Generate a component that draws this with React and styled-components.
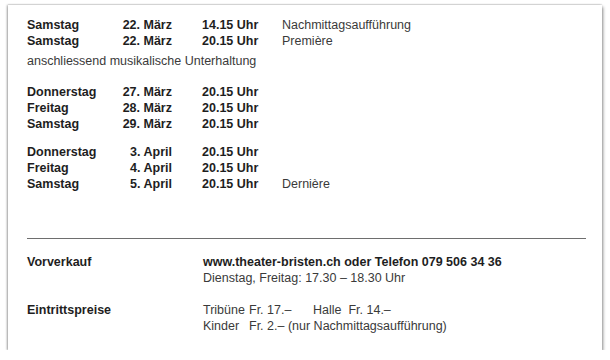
import React from "react";
import styled, { createGlobalStyle } from "styled-components";

const GlobalStyle = createGlobalStyle`
  body {
    margin: 0;
    background: #ffffff;
    font-family: "Liberation Sans", Arial, sans-serif;
  }
`;

const Card = styled.div`
  box-sizing: border-box;
  width: 594px;
  height: 345px;
  margin: 5px 0 0 8px;
  padding: 12px 16px 0 19px;
  background: #fff;
  box-shadow: 1px 2px 3px rgba(0, 0, 0, 0.45), -1px 0 2px rgba(0, 0, 0, 0.3),
    0 -1px 1px rgba(0, 0, 0, 0.06);
  font-size: 12.5px;
  line-height: 16px;
  color: #3a3a3a;
`;

const Group = styled.div`
  margin-top: ${(p) => p.$gap || 0}px;
`;

const Row = styled.div`
  display: grid;
  grid-template-columns: 95px 50px 110px 1fr;
  white-space: nowrap;
`;

const Day = styled.span`
  font-weight: bold;
  color: #1e1e1e;
`;

const DateCell = styled.span`
  font-weight: bold;
  color: #1e1e1e;
  text-align: right;
`;

const Time = styled.span`
  font-weight: bold;
  color: #1e1e1e;
  padding-left: 30px;
`;

const Note = styled.span``;

const Remark = styled.div`
  margin-top: 4px;
`;

const Rule = styled.hr`
  margin: 46px 0 0;
  border: none;
  border-top: 1px solid #6e6e6e;
`;

const InfoRow = styled.div`
  display: grid;
  grid-template-columns: 176px 1fr;
  margin-top: ${(p) => p.$gap}px;
`;

const Label = styled.div`
  font-weight: bold;
  color: #1e1e1e;
`;

const Strong = styled.div`
  font-weight: bold;
  color: #1e1e1e;
`;

const PriceRow = styled.div`
  display: flex;
  white-space: nowrap;
`;

const PriceLabel = styled.span`
  width: 46px;
`;

const Amount = styled.span`
  width: ${(p) => p.$w || "auto"};
`;

const shows = [
  [
    ["Samstag", "22. März", "14.15 Uhr", "Nachmittagsaufführung"],
    ["Samstag", "22. März", "20.15 Uhr", "Première"],
  ],
  [
    ["Donnerstag", "27. März", "20.15 Uhr", ""],
    ["Freitag", "28. März", "20.15 Uhr", ""],
    ["Samstag", "29. März", "20.15 Uhr", ""],
  ],
  [
    ["Donnerstag", "3. April", "20.15 Uhr", ""],
    ["Freitag", "4. April", "20.15 Uhr", ""],
    ["Samstag", "5. April", "20.15 Uhr", "Dernière"],
  ],
];

const gaps = [0, 15, 12];

function ShowRow({ show }) {
  const [day, date, time, note] = show;
  return (
    <Row>
      <Day>{day}</Day>
      <DateCell>{date}</DateCell>
      <Time>{time}</Time>
      <Note>{note}</Note>
    </Row>
  );
}

export default function App() {
  return (
    <>
      <GlobalStyle />
      <Card>
        {shows.map((group, i) => (
          <React.Fragment key={i}>
            <Group $gap={gaps[i]}>
              {group.map((s, j) => (
                <ShowRow key={j} show={s} />
              ))}
            </Group>
            {i === 0 && (
              <Remark>anschliessend musikalische Unterhaltung</Remark>
            )}
          </React.Fragment>
        ))}
        <Rule />
        <InfoRow $gap={15}>
          <Label>Vorverkauf</Label>
          <div>
            <Strong>www.theater-bristen.ch oder Telefon 079 506 34 36</Strong>
            <div>Dienstag, Freitag: 17.30 – 18.30 Uhr</div>
          </div>
        </InfoRow>
        <InfoRow $gap={16}>
          <Label>Eintrittspreise</Label>
          <div>
            <PriceRow>
              <PriceLabel>Tribüne</PriceLabel>
              <Amount $w="64px">Fr. 17.–</Amount>
              <Amount>Halle&nbsp; Fr. 14.–</Amount>
            </PriceRow>
            <PriceRow>
              <PriceLabel>Kinder</PriceLabel>
              <Amount>Fr. 2.– (nur Nachmittagsaufführung)</Amount>
            </PriceRow>
          </div>
        </InfoRow>
      </Card>
    </>
  );
}
